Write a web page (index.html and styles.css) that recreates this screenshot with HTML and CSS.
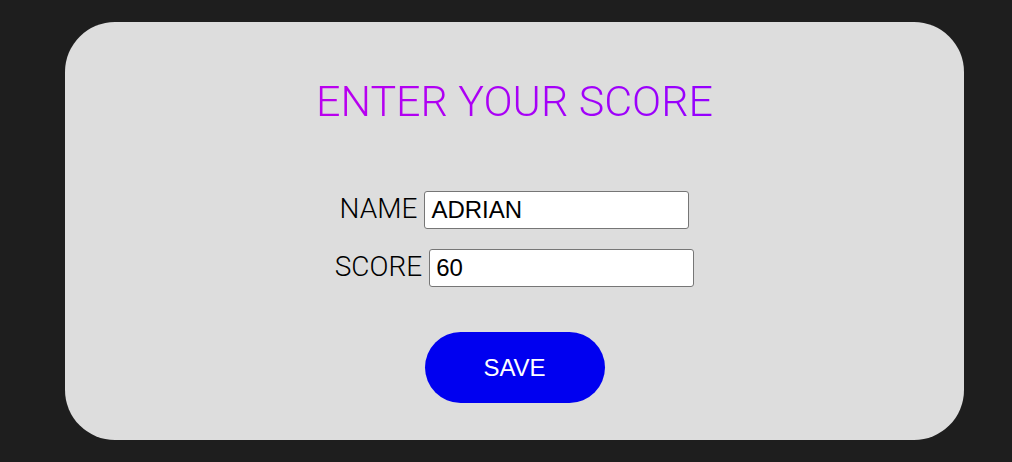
FILE: index.html
```html
<!DOCTYPE html>
<html>
<head>
<meta charset="utf-8">
<link rel="stylesheet" href="styles.css">
</head>
<body>
<main class="card">
  <h1 class="title">ENTER YOUR SCORE</h1>
  <form class="form">
    <div class="row">
      <label class="label" for="name">NAME</label>
      <input class="field" id="name" type="text" value="ADRIAN">
    </div>
    <div class="row">
      <label class="label" for="score">SCORE</label>
      <input class="field" id="score" type="text" value="60">
    </div>
    <button class="save" type="button">SAVE</button>
  </form>
</main>
</body>
</html>
```

FILE: styles.css
```css
html, body {
  margin: 0;
  padding: 0;
  background: #1e1e1e;
  height: 100%;
}
body {
  padding: 22px 48px 22px 65px;
  box-sizing: border-box;
}
.card {
  background: #dddddd;
  border-radius: 50px;
  height: 418px;
  box-sizing: border-box;
  padding-top: 52px;
  display: flex;
  flex-direction: column;
  align-items: center;
}
.title {
  margin: 0;
  font-family: Roboto, sans-serif;
  font-weight: 300;
  font-size: 43px;
  line-height: 54px;
  background: linear-gradient(to right, #bb00ee, #9500ff);
  -webkit-background-clip: text;
  background-clip: text;
  color: transparent;
}
.form {
  margin-top: 63px;
  display: flex;
  flex-direction: column;
  align-items: center;
  gap: 20px;
}
.row {
  display: flex;
  align-items: center;
  gap: 7px;
}
.label {
  font-family: Roboto, sans-serif;
  font-weight: 300;
  font-size: 28px;
  color: #000;
  padding-bottom: 3px;
}
.field {
  width: 265px;
  height: 38px;
  box-sizing: border-box;
  border: 1px solid #767676;
  border-radius: 3px;
  background: #fff;
  padding: 0 6px;
  font-family: "Liberation Sans", Arial, sans-serif;
  font-size: 24px;
  color: #000;
  margin: 0;
}
.save {
  margin-top: 25px;
  width: 180px;
  height: 71px;
  border: none;
  border-radius: 36px;
  background: #0000f0;
  color: #fff;
  font-family: "Liberation Sans", Arial, sans-serif;
  font-size: 24px;
  padding: 0;
}
```
